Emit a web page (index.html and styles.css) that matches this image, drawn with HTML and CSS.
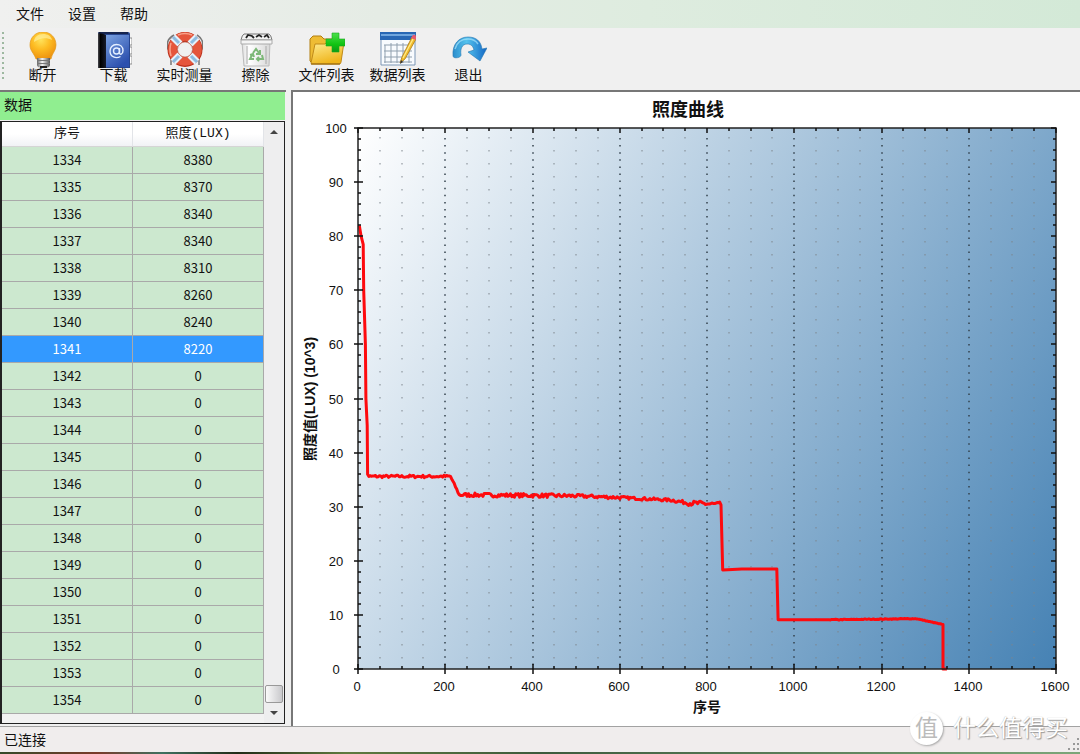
FILE: index.html
```html
<!DOCTYPE html>
<html lang="zh-CN">
<head>
<meta charset="utf-8">
<meta name="viewport" content="width=device-width, initial-scale=1">
<title>照度曲线</title>
<link rel="stylesheet" href="styles.css">
</head>
<body>
<nav class="menubar" aria-label="菜单">
  <button type="button">文件</button>
  <button type="button">设置</button>
  <button type="button">帮助</button>
</nav>

<div class="toolbar">
  <span class="grip"></span>
  <button type="button" class="tool">
    <svg viewBox="0 0 36 36" aria-hidden="true">
      <defs>
        <radialGradient id="bulb" cx=".42" cy=".3" r=".7"><stop offset="0" stop-color="#ffe25a"/><stop offset=".5" stop-color="#fdbb22"/><stop offset="1" stop-color="#ee9410"/></radialGradient>
        <linearGradient id="cap"><stop offset="0" stop-color="#666"/><stop offset=".4" stop-color="#f4f4f4"/><stop offset="1" stop-color="#555"/></linearGradient>
      </defs>
      <path d="M18 0C10 0 5 6 5 13c0 6 4 8 6 14h15c1-6 5-8 5-14C31 6 26 0 18 0z" fill="url(#bulb)" stroke="#e39a1c" stroke-width=".7"/>
      <path d="M9 10c0-5 4-8 9-8s8 2 9 6c-6-3-12-2-18 2z" fill="#fff1a0" opacity=".65"/>
      <path d="M12 26h13v7q0 3-6.500 3T12 33z" fill="url(#cap)"/>
      <path d="M12 28.500h13M12 31.500h13" stroke="#777" stroke-width="1"/>
      <path d="M15 35h7" stroke="#222" stroke-width="2"/>
    </svg>
    <span>断开</span>
  </button>
  <button type="button" class="tool">
    <svg viewBox="0 0 36 36" aria-hidden="true">
      <defs>
        <linearGradient id="cover" x2=".6" y2="1"><stop offset="0" stop-color="#7ba3e2"/><stop offset="1" stop-color="#2c50ae"/></linearGradient>
        <linearGradient id="spine"><stop offset="0" stop-color="#4a4a50"/><stop offset=".3" stop-color="#000"/><stop offset="1" stop-color="#171b2a"/></linearGradient>
      </defs>
      <path d="M31 6h5v7h-5M31 15h5v7h-5M31 24h5v8h-5" fill="#fff" stroke="#777" stroke-width=".8"/>
      <path d="M3 0h29q2 0 2 2v34H2V1q0-1 1-1z" fill="#26458f"/>
      <path d="M9 3h24v32H9z" fill="url(#cover)"/>
      <path d="M3 0l7 3v33H2V2z" fill="url(#spine)"/>
      <path d="M3 1h29" stroke="#101a38" stroke-width="1.500"/>
      <circle cx="20.500" cy="19" r="3" fill="none" stroke="#e4efff" stroke-width="1.400"/>
      <path d="M23.500 16v4.500c0 3 3.500 2 3.500-2 0-4-3-6-6.500-6-4 0-6.500 3-6.500 6.500 0 6 6 8 10.500 5.500" fill="none" stroke="#e4efff" stroke-width="1.400"/>
    </svg>
    <span>下载</span>
  </button>
  <button type="button" class="tool">
    <svg viewBox="0 0 36 36" aria-hidden="true">
      <path d="M7 3Q-2 8 1 17l3 4v12M30 3q8 5 5 14l-3 4v12" fill="none" stroke="#777" stroke-width="1.500"/>
      <circle cx="18" cy="17.500" r="12.500" fill="none" stroke="#b9301c" stroke-width="10"/>
      <circle cx="18" cy="17" r="12.500" fill="none" stroke="#e5563c" stroke-width="8.500"/>
      <path d="M6 5l7 7M23 12l7-7M6 30l7-7M23 23l7 7" stroke="#e4f1fb" stroke-width="7"/>
      <path d="M6 5l6 6M24 11l6-6M6 30l6-6M24 24l6 6" stroke="#8dbce0" stroke-width="3"/>
      <path d="M11 3q7-3 14 0M4 11q-2 6 0 13" fill="none" stroke="#f8a18a" stroke-width="1.500"/>
      <circle cx="18" cy="17.500" r="7.500" fill="#f0f0f0" stroke="#bf5a48" stroke-width=".7"/>
    </svg>
    <span>实时测量</span>
  </button>
  <button type="button" class="tool">
    <svg viewBox="0 0 36 36" aria-hidden="true">
      <defs><linearGradient id="bin"><stop offset="0" stop-color="#ddd"/><stop offset=".25" stop-color="#fff"/><stop offset="1" stop-color="#d8d8d8"/></linearGradient></defs>
      <path d="M4 10h28l-1 24H6z" fill="url(#bin)" stroke="#bbb" stroke-width="1"/>
      <path d="M9 14v18M28 14v18" stroke="#aaa" stroke-width="1"/>
      <path d="M6 2q-2 1-3 6h31q-1-5-3-6z" fill="#f2f2f2" stroke="#777" stroke-width="1"/>
      <path d="M8 6l2-3 4 1 2 2M18 5l3-2 3 2M26 5l3-2 2 3" fill="none" stroke="#222" stroke-width="1.800"/>
      <path d="M3 8h31v4H3z" fill="#f5f5f5" stroke="#aaa" stroke-width="1"/>
      <g fill="none" stroke="#7db878" stroke-width="2"><path d="M15 21l3-4 3 4M22 18v4h-4M24 23l1 4h-5M21 25l-2 2 2 2M16 27h-4l2-4M12 23l3-1 1 3"/></g>
    </svg>
    <span>擦除</span>
  </button>
  <button type="button" class="tool">
    <svg viewBox="0 0 36 36" aria-hidden="true">
      <defs>
        <linearGradient id="folder" x2=".4" y2="1"><stop offset="0" stop-color="#fff09a"/><stop offset="1" stop-color="#efb51c"/></linearGradient>
        <linearGradient id="plus" x2="0" y2="1"><stop offset="0" stop-color="#4be04b"/><stop offset=".6" stop-color="#12c312"/><stop offset="1" stop-color="#0b9a16"/></linearGradient>
      </defs>
      <path d="M1 29V7l3-3h8l3 3h15v21l-27 3z" fill="#eebc34" stroke="#b27e10" stroke-width="1"/>
      <path d="M6 12h10l3-3h15q1 0 1 1l-3 20q0 2-2 2H3q-1 0-1-1z" fill="url(#folder)" stroke="#c08a18" stroke-width="1"/>
      <path d="M2 32h29" stroke="#9a6c12" stroke-width="1.200"/>
      <path d="M23 1h7v6h6v7h-6v6h-7v-6h-6V7h6z" fill="url(#plus)" stroke="#18a81e" stroke-width=".6"/>
    </svg>
    <span>文件列表</span>
  </button>
  <button type="button" class="tool">
    <svg viewBox="0 0 36 36" aria-hidden="true">
      <path d="M1 1h34v32H1z" fill="#f8fbfe" stroke="#7d97b6" stroke-width="1"/>
      <path d="M0 0h36v8H0z" fill="#2867b4"/>
      <path d="M1 2h34v2H1z" fill="#6fa5dd"/>
      <path d="M4 13h28M4 19h28M4 25h28M4 30h28M5 13v18M11 11v20M17 11v20M23 11v20M29 11v20" stroke="#8f9fae" stroke-width="1"/>
      <path d="M20 31l2-6L32 5l4 2-11 20z" fill="#f3be2c" stroke="#a97817" stroke-width=".8"/>
      <path d="M23 26L33 7" stroke="#ffec8c" stroke-width="1.200"/>
      <path d="M31 6l2-3q3-1 3 2v3z" fill="#e65b6f"/>
      <path d="M20 32l1-4 2 2z" fill="#333"/>
    </svg>
    <span>数据列表</span>
  </button>
  <button type="button" class="tool">
    <svg viewBox="0 0 36 36" aria-hidden="true">
      <defs><linearGradient id="turn"><stop offset="0" stop-color="#2b8dcc"/><stop offset=".4" stop-color="#55c3ee"/><stop offset="1" stop-color="#1266c4"/></linearGradient></defs>
      <path d="M2 24C1 12 8 5 17 5c8 0 13 4 14 12l5-1-7 13-12-9 6-2c-1-4-3-6-7-6-5 0-7 5-6 11 0 3-8 4-8 1z" fill="url(#turn)" stroke="#2474af" stroke-width=".6"/>
      <path d="M4 17C6 10 11 7 17 7c5 0 8 2 10 5" fill="none" stroke="#a6e4fb" stroke-width="1.500" opacity=".7"/>
    </svg>
    <span>退出</span>
  </button>
</div>

<main class="workspace">
  <section class="data-panel" aria-labelledby="data-title">
    <h2 class="data-title" id="data-title">数据</h2>
    <div class="grid-box">
      <table class="data-grid">
        <thead><tr><th>序号</th><th>照度(LUX)</th></tr></thead>
        <tbody>
          <tr><td>1334</td><td>8380</td></tr>
          <tr><td>1335</td><td>8370</td></tr>
          <tr><td>1336</td><td>8340</td></tr>
          <tr><td>1337</td><td>8340</td></tr>
          <tr><td>1338</td><td>8310</td></tr>
          <tr><td>1339</td><td>8260</td></tr>
          <tr><td>1340</td><td>8240</td></tr>
          <tr class="selected"><td>1341</td><td>8220</td></tr>
          <tr><td>1342</td><td>0</td></tr>
          <tr><td>1343</td><td>0</td></tr>
          <tr><td>1344</td><td>0</td></tr>
          <tr><td>1345</td><td>0</td></tr>
          <tr><td>1346</td><td>0</td></tr>
          <tr><td>1347</td><td>0</td></tr>
          <tr><td>1348</td><td>0</td></tr>
          <tr><td>1349</td><td>0</td></tr>
          <tr><td>1350</td><td>0</td></tr>
          <tr><td>1351</td><td>0</td></tr>
          <tr><td>1352</td><td>0</td></tr>
          <tr><td>1353</td><td>0</td></tr>
          <tr><td>1354</td><td>0</td></tr>
        </tbody>
      </table>
      <div class="scrollbar">
        <button type="button" aria-label="向上滚动"><svg viewBox="0 0 8 4" aria-hidden="true"><path d="M0 4l4-4 4 4z"/></svg></button>
        <span class="track"><span class="thumb"></span></span>
        <button type="button" aria-label="向下滚动"><svg viewBox="0 0 8 4" aria-hidden="true"><path d="M0 0l4 4 4-4z"/></svg></button>
      </div>
    </div>
  </section>

  <section class="chart-panel">
    <svg class="chart" id="chart" viewBox="0 0 787 632" role="img" aria-label="照度曲线">
      <defs>
        <linearGradient id="plot-fill" gradientUnits="userSpaceOnUse" x1="65" y1="36" x2="828" y2="458">
          <stop offset="0" stop-color="#fff"/><stop offset="1" stop-color="#4682b4"/>
        </linearGradient>
      </defs>
      <text class="chart-title" x="395" y="24">照度曲线</text>
      <rect x="65" y="36" width="698" height="541" fill="url(#plot-fill)"/>
      <g id="gridlines"></g>
      <path id="curve" class="curve"/>
      <rect class="frame" x="65" y="36" width="698" height="541"/>
      <path id="ticks" class="ticks"/>
      <g id="labels" class="labels"></g>
      <text class="axis-title" x="414" y="620">序号</text>
      <text class="axis-title" transform="translate(22 307) rotate(-90)">照度值(LUX) (10^3)</text>
    </svg>
  </section>
</main>

<footer class="statusbar">
  <span>已连接</span>
  <svg class="size-grip" viewBox="0 0 12 12" aria-hidden="true"><path d="M9 0h2v2H9zM5 5h2v2H5zM9 5h2v2H9zM0 10h2v2H0zM5 10h2v2H5zM9 10h2v2H9z"/></svg>
</footer>
<div class="desktop-edge"></div>

<div class="watermark"><span class="seal">值</span><span>什么值得买</span></div>
<script src="chart.js"></script>
</body>
</html>
```
FILE: styles.css
```css
* { box-sizing: border-box; }

body {
  margin: 0;
  min-height: 100vh;
  display: flex;
  flex-direction: column;
  position: relative;
  background: #f0f0f0;
  color: #111;
  font-family: "Liberation Sans", "Noto Sans CJK SC", sans-serif;
  font-size: 14px;
}

button {
  border: 0;
  padding: 0;
  background: none;
  color: inherit;
  font: inherit;
}

.menubar {
  display: flex;
  gap: 24px;
  height: 28px;
  padding: 0 16px 3px;
  background: linear-gradient(90deg, #f0f0ef, #e5ece5 35%, #deecdf 60%, #d3e9d7);
}

.toolbar {
  display: flex;
  height: 62px;
  padding: 4px 2px 0;
  background: #f0f0f0;
}

.grip {
  width: 2px;
  height: 50px;
  margin-right: 3px;
  background: repeating-linear-gradient(#9db8a0 0 2px, transparent 2px 5px);
}

.tool {
  width: 71px;
  height: 50px;
  display: flex;
  flex-direction: column;
  align-items: center;
  line-height: 14px;
  white-space: nowrap;
}

.tool svg {
  width: 36px;
  height: 36px;
  flex: none;
}

.workspace {
  flex: 1;
  display: flex;
  gap: 5px;
}

.data-panel {
  width: 286px;
  flex: none;
  display: flex;
  flex-direction: column;
  padding-bottom: 2px;
  border-top: 2px solid #777;
}

.data-title {
  margin: 0 1px 1px 0;
  height: 28px;
  padding-left: 4px;
  background: #90ee90;
  font-size: 14px;
  font-weight: 400;
  line-height: 26px;
}

.grid-box {
  flex: 1;
  display: flex;
  margin-right: 1px;
  border: 1px solid #222;
  border-left-width: 2px;
  background: #f2f2f2;
}

.data-grid {
  width: 0;
  flex: 1;
  align-self: flex-start;
  table-layout: fixed;
  border-collapse: separate;
  border-spacing: 0;
  font-size: 13px;
  text-align: center;
}

.data-grid th {
  width: 50%;
  height: 25px;
  padding: 0;
  border-right: 1px solid #e2e4e8;
  border-bottom: 1px solid #d5d5d5;
  background: linear-gradient(#fff 50%, #f1f2f5);
  font-family: "Liberation Mono", "Noto Sans CJK SC", monospace;
  font-weight: 400;
  line-height: 20px;
}

.data-grid td {
  height: 27px;
  padding: 0;
  border-right: 1px solid #a9a9a9;
  border-bottom: 1px solid #a9a9a9;
  background: #cce8cf;
  font-family: "Noto Sans CJK SC", sans-serif;
  line-height: 20px;
}

.data-grid .selected td {
  background: #3399ff;
  color: #fff;
}

.scrollbar {
  width: 20px;
  flex: none;
  display: flex;
  flex-direction: column;
  background: #eeeeef;
}

.scrollbar button {
  height: 20px;
  display: grid;
  place-items: center;
}

.scrollbar svg {
  width: 8px;
  height: 4px;
  fill: #444;
}

.track {
  flex: 1;
  display: flex;
  flex-direction: column;
  justify-content: flex-end;
  padding: 0 1px;
}

.thumb {
  height: 18px;
  border: 1px solid #999;
  border-radius: 2px;
  background: linear-gradient(90deg, #fafafa, #c9c9cc);
}

.chart-panel {
  flex: 1;
  min-width: 0;
  border: solid #777;
  border-width: 2px 0 0 2px;
  background: #fff;
}

.chart {
  display: block;
  width: 100%;
  height: auto;
}

.chart text { text-anchor: middle; fill: #111; }
.chart .chart-title { font-size: 18px; font-weight: 700; }
.chart .axis-title { font-size: 14px; font-weight: 700; }
.labels { font-size: 13px; }
.frame { fill: none; stroke: #222; stroke-width: 1.5; }
.ticks { fill: none; stroke: #111; stroke-width: 1.5; }
.curve { fill: none; stroke: #fe0a0e; stroke-width: 3; stroke-linejoin: round; }
.major { stroke: #33414c; stroke-width: 1.5; stroke-dasharray: 1.5 5.6; }
.minor { stroke: #7d858c; stroke-width: 1.5; stroke-dasharray: 1.5 11.5; opacity: .65; }

.statusbar {
  height: 26px;
  display: flex;
  align-items: flex-end;
  justify-content: space-between;
  padding: 0 0 2px 4px;
  border-top: 1px solid #a2a2a2;
  background: #f0eded;
  line-height: 20px;
}

.size-grip {
  width: 12px;
  height: 12px;
  fill: #999;
}

.desktop-edge {
  height: 2px;
  background: linear-gradient(90deg, #354a2a, #7a3a2a 9%, #3f7060 15%, #222b16 22%, #5f7a3e 32%, #3d5a3c 50%, #7ca679);
}

.watermark {
  position: absolute;
  right: 12px;
  bottom: 9px;
  display: flex;
  align-items: center;
  gap: 10px;
  color: #fff;
  font-size: 23px;
  line-height: 34px;
  text-shadow: 1px 1px 1px #999, 0 0 1px #aaa;
  pointer-events: none;
}

.seal {
  width: 33px;
  height: 33px;
  border-radius: 50%;
  background: #fff;
  color: #bbb;
  line-height: 32px;
  text-align: center;
  text-shadow: none;
  box-shadow: 1px 1px 2px #aaa;
}
```
FILE: chart.js
```javascript
const NS = "http://www.w3.org/2000/svg";
const plot = { left: 65, top: 36, right: 763, bottom: 577 };
const px = v => plot.left + (v / 1600) * (plot.right - plot.left);
const py = v => plot.bottom - (v / 100) * (plot.bottom - plot.top);

function add(parent, name, attrs, text) {
  const el = document.createElementNS(NS, name);
  for (const key in attrs) el.setAttribute(key, attrs[key]);
  if (text !== undefined) el.textContent = text;
  parent.appendChild(el);
}

const gridlines = document.getElementById("gridlines");
const labels = document.getElementById("labels");
let ticks = "";

for (let v = 0; v <= 1600; v += 50) {
  const x = Math.round(px(v));
  const major = v % 200 === 0;
  if (v > 0 && v < 1600) {
    add(gridlines, "line", {
      class: major ? "major" : "minor",
      x1: x, x2: x, y1: plot.top + (major ? 10 : 9), y2: plot.bottom
    });
  }
  ticks += major
    ? `M${x} ${plot.bottom - 5}v10M${x} ${plot.top}v5`
    : `M${x} ${plot.bottom}v-3M${x} ${plot.top}v3`;
  if (major) add(labels, "text", { x: x - 1, y: 599 }, v);
}

for (let v = 0; v <= 100; v += 2) {
  const y = Math.round(py(v));
  const major = v % 10 === 0;
  ticks += major
    ? `M${plot.left - 4} ${y}h9M${plot.right} ${y}h-5`
    : `M${plot.left} ${y}h3M${plot.right} ${y}h-3`;
  if (major) add(labels, "text", { x: 43, y: y + 5 }, v);
}
document.getElementById("ticks").setAttribute("d", ticks);

// Each entry: sample number, value in thousands of lux, noise up to this point.
const samples = [
  [3, 82, 0], [7, 80, 0], [12, 78.5, 0], [13, 70, 0], [17, 60, 0], [18, 50, 0],
  [21, 45, 0], [22, 36, 0], [25, 35.6, 0], [212, 35.6, 0.5], [232, 32.2, 0.4],
  [500, 32, 0.7], [600, 31.7, 0.6], [720, 31.2, 0.5], [755, 30.7, 0.6],
  [832, 30.4, 0.9], [836, 18.3, 0], [880, 18.5, 0], [960, 18.5, 0],
  [963, 9.1, 0], [1080, 9.1, 0], [1280, 9.3, 0.15], [1341, 8.2, 0.1],
  [1341, 0, 0], [1350, 0, 0]
];
let seed = 7;
const random = () => {
  seed = (seed * 16807) % 2147483647;
  return seed / 2147483647 - 0.5;
};
let path = `M${px(3)} ${py(82)}`;
for (let i = 1; i < samples.length; i++) {
  const [x0, y0] = samples[i - 1];
  const [x1, y1, noise] = samples[i];
  const steps = noise ? Math.max(1, Math.round((x1 - x0) / 3)) : 1;
  for (let s = 1; s <= steps; s++) {
    const t = s / steps;
    const y = y0 + (y1 - y0) * t + random() * noise;
    path += `L${px(x0 + (x1 - x0) * t).toFixed(1)} ${py(y).toFixed(1)}`;
  }
}
document.getElementById("curve").setAttribute("d", path);
```
